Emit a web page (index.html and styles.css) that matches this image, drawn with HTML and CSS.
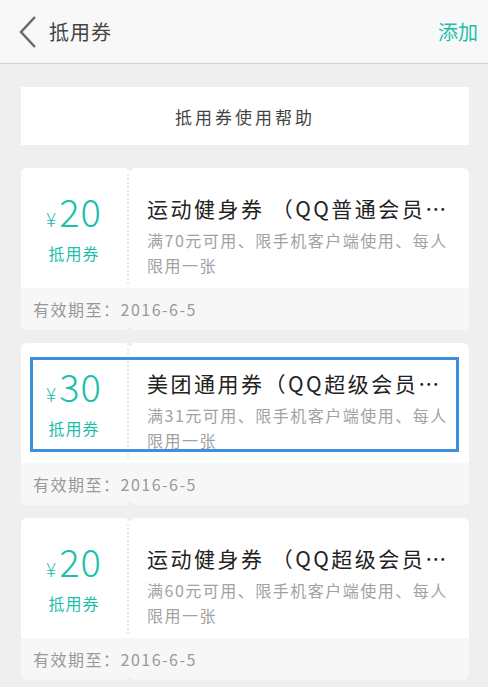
FILE: index.html
```html
<html>
<head>
<meta charset="utf-8">
<title>抵用券</title>
<link rel="stylesheet" href="styles.css">
</head>
<body>
  <div class="topbar">
    <svg class="back" width="20" height="34" viewBox="0 0 20 34">
      <polyline points="17,2 3,17 17,32" fill="none" stroke="#666" stroke-width="2.4" stroke-linejoin="miter"/>
    </svg>
    <span class="title">抵用券</span>
    <span class="add">添加</span>
  </div>

  <div class="page">
    <div class="help">抵用券使用帮助</div>

    <div class="ticket">
      <div class="main">
        <div class="left">
          <div class="price"><span class="yen">¥</span>20</div>
          <div class="kind">抵用券</div>
        </div>
        <div class="right">
          <div class="name">运动健身券 （QQ普通会员…</div>
          <div class="desc">满70元可用、限手机客户端使用、每人限用一张</div>
        </div>
      </div>
      <div class="foot">有效期至：2016-6-5</div>
    </div>

    <div class="ticket">
      <div class="main">
        <div class="left">
          <div class="price"><span class="yen">¥</span>30</div>
          <div class="kind">抵用券</div>
        </div>
        <div class="right">
          <div class="name">美团通用券（QQ超级会员…</div>
          <div class="desc">满31元可用、限手机客户端使用、每人限用一张</div>
        </div>
        <div class="focus"></div>
      </div>
      <div class="foot">有效期至：2016-6-5</div>
    </div>

    <div class="ticket">
      <div class="main">
        <div class="left">
          <div class="price"><span class="yen">¥</span>20</div>
          <div class="kind">抵用券</div>
        </div>
        <div class="right">
          <div class="name">运动健身券 （QQ超级会员…</div>
          <div class="desc">满60元可用、限手机客户端使用、每人限用一张</div>
        </div>
      </div>
      <div class="foot">有效期至：2016-6-5</div>
    </div>
  </div>
</body>
</html>
```

FILE: styles.css
```css
body {
  margin: 0;
  background: #efefef;
  font-family: "Noto Sans CJK SC", "Noto Sans", sans-serif;
  overflow: hidden;
}

.topbar {
  height: 63px;
  background: #f8f8f8;
  border-bottom: 1px solid #d2d2d2;
  display: flex;
  align-items: center;
  padding: 0 10px 0 18px;
}
.topbar .title {
  margin-left: 11px;
  font-size: 20px;
  letter-spacing: 1px;
  color: #444;
}
.topbar .add {
  margin-left: auto;
  font-size: 20px;
  color: #1cbfa9;
}

.page { padding: 23px 19px 0 21px; }

.help {
  height: 58px;
  background: #fff;
  display: flex;
  align-items: center;
  justify-content: center;
  font-size: 17px;
  letter-spacing: 3px;
  color: #444;
  margin-bottom: 23px;
}

.ticket {
  background: #fff;
  border-radius: 6px;
  margin-bottom: 13px;
  overflow: hidden;
  position: relative;
}
.ticket::before, .ticket::after {
  content: "";
  position: absolute;
  left: 106px;
  width: 6px;
  height: 6px;
  border-radius: 3px;
  background: #efefef;
}
.ticket::before { top: -3px; }
.ticket::after { bottom: -3px; }

.main {
  height: 120px;
  display: flex;
  position: relative;
}
.left {
  width: 108px;
  border-right: 2px dotted #e8e8e8;
  box-sizing: border-box;
  text-align: center;
  color: #1cbfa9;
  padding-top: 17px;
  margin-top: 6px;
  margin-bottom: 4px;
}
.price {
  font-size: 38px;
  font-weight: 300;
  line-height: 40px;
  letter-spacing: 1px;
}
.yen {
  font-size: 19px;
  margin-right: 2px;
}
.kind {
  margin-top: 4px;
  font-size: 16px;
  line-height: 20px;
  letter-spacing: 1px;
}
.right {
  flex: 1;
  min-width: 0;
  padding: 26px 10px 0 18px;
}
.name {
  font-size: 21px;
  line-height: 28px;
  letter-spacing: 2.5px;
  color: #222;
  white-space: nowrap;
}
.desc {
  margin-top: 6px;
  font-size: 16px;
  line-height: 25px;
  letter-spacing: 1.5px;
  color: #a2a2a2;
}
.focus {
  position: absolute;
  left: 9px;
  right: 10px;
  top: 14px;
  bottom: 11px;
  border: 3px solid #3d8fe0;
}

.foot {
  height: 42px;
  background: #f7f7f7;
  padding-left: 12px;
  display: flex;
  align-items: center;
  font-size: 16px;
  letter-spacing: 1.5px;
  color: #999;
}
```
